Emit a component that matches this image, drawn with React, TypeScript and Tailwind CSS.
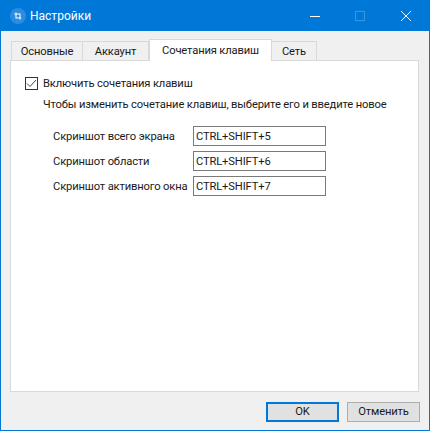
const TABS = ["Основные", "Аккаунт", "Сочетания клавиш", "Сеть"];
const TAB_WIDTHS = ["w-[72px]", "w-[66px]", "w-[123px]", "w-[45px]"];
const ACTIVE_TAB = 2;

const SHORTCUTS = [
  { label: "Скриншот всего экрана", value: "CTRL+SHIFT+5" },
  { label: "Скриншот области", value: "CTRL+SHIFT+6" },
  { label: "Скриншот активного окна", value: "CTRL+SHIFT+7" },
];

function AppIcon() {
  return (
    <div className="flex h-[16px] w-[16px] items-center justify-center rounded-full bg-[#2b8de0]">
      <svg width="8" height="8" viewBox="0 0 10 10" fill="none" stroke="#ffffff" strokeWidth="1.3">
        <path d="M2.5 0.5V7.5H9" />
        <path d="M0.5 2.5H7.5V9.5" />
      </svg>
    </div>
  );
}

function WindowControls() {
  return (
    <div className="ml-auto flex items-center">
      <svg width="10" height="10" viewBox="0 0 10 10" stroke="#ffffff" className="mr-[35px]">
        <path d="M0 5.5H10" />
      </svg>
      <svg width="10" height="10" viewBox="0 0 10 10" fill="none" stroke="#3a98e0" className="mr-[36px]">
        <path d="M0.5 0.5H9.5V9.5H0.5Z" />
      </svg>
      <svg width="10" height="10" viewBox="0 0 10 10" stroke="#ffffff" className="mr-[18px]">
        <path d="M0 0L10 10M10 0L0 10" />
      </svg>
    </div>
  );
}

export default function App() {
  return (
    <div className="flex h-[431px] w-[430px] flex-col overflow-hidden border border-[#0078d7] bg-[#f0f0f0] font-['Roboto',sans-serif] text-[11.2px] leading-[16px] tracking-[-0.15px] text-[#1a1a1a]">
      <div className="flex h-[30px] shrink-0 items-center bg-[#0078d7] pl-[9px] tracking-normal text-white">
        <AppIcon />
        <span className="ml-[4px] text-[12px]">Настройки</span>
        <WindowControls />
      </div>

      <div className="flex min-h-0 flex-1 flex-col pl-[9px] pr-[10px] pt-[8px]">
        <div className="flex h-[21px] shrink-0 items-end pl-[1px]">
          {TABS.map((tab, i) =>
            i === ACTIVE_TAB ? (
              <div
                key={tab}
                className={`relative z-10 -mb-[1px] flex h-[22px] ${TAB_WIDTHS[i]} items-center justify-center border border-b-0 border-[#d9d9d9] bg-white`}
              >
                {tab}
              </div>
            ) : (
              <div
                key={tab}
                className={`flex h-[19px] ${TAB_WIDTHS[i]} items-center justify-center border border-b-0 border-l-0 border-[#d9d9d9] bg-[#f0f0f0] pt-[2px] first:border-l`}
              >
                {tab}
              </div>
            ),
          )}
        </div>

        <div className="flex-1 border border-[#d9d9d9] bg-white pl-[14px] pt-[16px]">
          <label className="flex h-[13px] items-center">
            <span className="flex h-[13px] w-[13px] items-center justify-center border border-[#333333] bg-white">
              <svg width="11" height="11" viewBox="0 0 11 11" fill="none" stroke="#444444" strokeWidth="1">
                <path d="M1 5.5L4 8.5L10 2" />
              </svg>
            </span>
            <span className="ml-[5px]">Включить сочетания клавиш</span>
          </label>
          <p className="ml-[18px] mt-[7px] whitespace-nowrap">Чтобы изменить сочетание клавиш, выберите его и введите новое</p>

          <div className="ml-[28px] mt-[13px] flex flex-col gap-[5px]">
            {SHORTCUTS.map((s) => (
              <div key={s.label} className="flex items-center">
                <span className="w-[140px] shrink-0 whitespace-nowrap pt-[1px]">{s.label}</span>
                <div className="flex h-[20px] w-[133px] items-center border border-[#7a7a7a] bg-white pl-[2px] pt-[1px]">
                  {s.value}
                </div>
              </div>
            ))}
          </div>
        </div>

        <div className="-mr-[1px] flex h-[38px] shrink-0 items-center justify-end gap-[8px] pt-[1px]">
          <button className="h-[20px] w-[73px] border-2 border-[#0078d7] bg-[#e1e1e1]">OK</button>
          <button className="h-[20px] w-[73px] border border-[#adadad] bg-[#e1e1e1]">Отменить</button>
        </div>
      </div>
    </div>
  );
}
